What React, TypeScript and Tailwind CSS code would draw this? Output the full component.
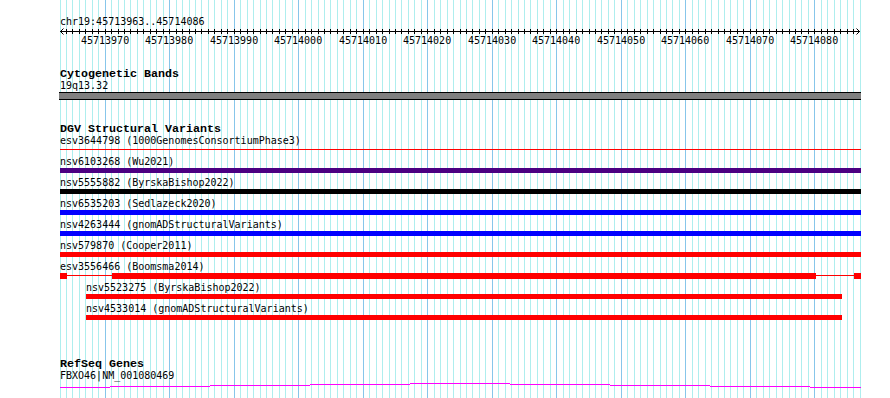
import React from 'react';

const START = 45713963;
const BASES = 124;
const BP_PX = 800 / BASES;
const xAt = (k: number) => 60 + k * BP_PX;

const mono = "font-['DejaVu_Sans_Mono',monospace] text-[10px] text-black";
const title = "font-['Liberation_Mono',monospace] font-bold text-[11.667px] leading-[12px] text-black";

// background grid: one line per base, darker every 10 bp
function Grid() {
  const lines = [];
  for (let k = 0; k <= BASES; k++) {
    const major = (START + k) % 10 === 0;
    const x = Math.floor(xAt(k)) + 0.5;
    lines.push(
      <line key={k} x1={x} x2={x} y1={0} y2={398} stroke={major ? '#87c6ea' : '#aeeeee'} strokeWidth={1} />
    );
  }
  return (
    <svg className="absolute left-0 top-0" width={890} height={398} shapeRendering="crispEdges">
      {lines}
    </svg>
  );
}

function Ruler() {
  const ticks = [];
  for (let k = 1; k < BASES; k++) {
    const x = Math.floor(xAt(k)) - 60 + 0.5;
    ticks.push(<line key={k} x1={x} x2={x} y1={1} y2={6} stroke="#000" />);
  }
  const labels = [];
  for (let k = 7; k < BASES; k += 10) {
    labels.push(
      <div
        key={k}
        className={`${mono} leading-[13px] absolute top-[6px] w-[48px] text-center`}
        style={{ left: Math.floor(xAt(k)) - 60 - 24 }}
      >
        {START + k}
      </div>
    );
  }
  return (
    <div className="relative h-[20px] w-[800px]">
      <svg className="absolute left-0 top-0" width={802} height={8} shapeRendering="crispEdges">
        <line x1={0} x2={800} y1={3.5} y2={3.5} stroke="#000" />
        {ticks}
        <polyline points="3.5,0.5 0.5,3.5 3.5,6.5" fill="none" stroke="#000" shapeRendering="auto" />
        <polyline points="796.5,0.5 799.5,3.5 796.5,6.5" fill="none" stroke="#000" shapeRendering="auto" />
      </svg>
      {labels}
    </div>
  );
}

function Label({ children, indent }: { children: React.ReactNode; indent?: boolean }) {
  return (
    <div className={`${mono} leading-[12px] h-[12px] whitespace-pre ${indent ? 'pl-[26px]' : ''}`}>
      {children}
    </div>
  );
}

const solidRows = [
  { label: 'nsv6103268 (Wu2021)', bar: 'bg-[#4b0082]' },
  { label: 'nsv5555882 (ByrskaBishop2022)', bar: 'bg-black' },
  { label: 'nsv6535203 (Sedlazeck2020)', bar: 'bg-[#0000ff]' },
  { label: 'nsv4263444 (gnomADStructuralVariants)', bar: 'bg-[#0000ff]' },
  { label: 'nsv579870 (Cooper2011)', bar: 'bg-[#ff0000]' },
];

function GeneLine() {
  const levels = [5, 4, 3, 2, 1, 2, 3, 4, 5];
  const xs = [0, 50, 150, 250, 350, 450, 550, 650, 750, 801];
  return (
    <svg width={802} height={7} shapeRendering="crispEdges">
      {levels.map((lv, i) => (
        <line key={i} x1={xs[i]} x2={xs[i + 1]} y1={lv + 0.5} y2={lv + 0.5} stroke="#ff00ff" />
      ))}
    </svg>
  );
}

export default function App() {
  return (
    <div className="relative w-[890px] h-[398px] overflow-hidden bg-white">
      <Grid />
      <div className="relative flex flex-col pl-[60px] pt-[15px]">
        {/* Overview ruler */}
        <div className={`${mono} leading-[13px] h-[13px]`}>chr19:45713963..45714086</div>
        <Ruler />

        {/* Cytogenetic bands */}
        <div className={`${title} mt-[20px] h-[12px]`}>Cytogenetic Bands</div>
        <Label>19q13.32</Label>
        <div className="-ml-px w-[802px] h-[8px] bg-[#808080] border-y border-black" />

        {/* DGV */}
        <div className={`${title} mt-[23px] h-[12px]`}>DGV Structural Variants</div>

        <Label>esv3644798 (1000GenomesConsortiumPhase3)</Label>
        <div className="h-[5px] mb-[4px] pt-[2px]">
          <div className="w-[801px] h-px bg-[#ff0000]" />
        </div>

        {solidRows.map((r) => (
          <React.Fragment key={r.label}>
            <Label>{r.label}</Label>
            <div className={`w-[801px] h-[5px] mb-[4px] ${r.bar}`} />
          </React.Fragment>
        ))}

        <Label>esv3556466 (Boomsma2014)</Label>
        <div className="flex items-start h-[6px] mb-[3px]">
          <div className="w-[7px] h-[6px] bg-[#ff0000]" />
          <div className="w-[45px] h-px mt-[2px] bg-[#ff0000]" />
          <div className="w-[704px] h-[6px] bg-[#ff0000]" />
          <div className="w-[38px] h-px mt-[2px] bg-[#ff0000]" />
          <div className="w-[7px] h-[6px] bg-[#ff0000]" />
        </div>

        <Label indent>nsv5523275 (ByrskaBishop2022)</Label>
        <div className="ml-[26px] w-[756px] h-[5px] mb-[4px] bg-[#ff0000]" />
        <Label indent>nsv4533014 (gnomADStructuralVariants)</Label>
        <div className="ml-[26px] w-[756px] h-[5px] mb-[4px] bg-[#ff0000]" />

        {/* RefSeq */}
        <div className={`${title} mt-[34px] h-[12px]`}>RefSeq Genes</div>
        <Label>FBXO46|NM_001080469</Label>
        <GeneLine />
      </div>
    </div>
  );
}
